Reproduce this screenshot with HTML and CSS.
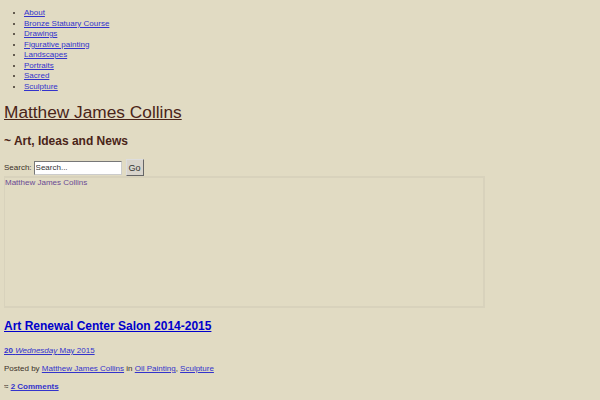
FILE: index.html
```
<!DOCTYPE html>
<html>
<head>
  <meta charset="UTF-8">
  <title>Matthew James Collins ~ Art, Ideas and News</title>
  <link rel="stylesheet" href="styles.css">
</head>
<body>
<ul class="menu">
  <li><a href="#">About</a></li>
  <li><a href="#">Bronze Statuary Course</a></li>
  <li><a href="#">Drawings</a></li>
  <li><a href="#">Figurative painting</a></li>
  <li><a href="#">Landscapes</a></li>
  <li><a href="#">Portraits</a></li>
  <li><a href="#">Sacred</a></li>
  <li><a href="#">Sculpture</a></li>
</ul>
<header class="masthead">
  <h1 class="siteTitle"><a href="#">Matthew James Collins</a></h1>
  <h2 class="siteDesc">~ Art, Ideas and News</h2>
</header>
<form class="search">
  <label>Search:</label>
  <input type="text" value="Search...">
  <button type="button">Go</button>
</form>
<div class="banner">
  <a href="#">Matthew James Collins</a>
</div>
<div class="post">
  <h2 class="postTitle"><a href="#">Art Renewal Center Salon 2014-2015</a></h2>
  <p class="postDate"><a href="#"><b>20</b> <i>Wednesday</i> May 2015</a></p>
  <p class="postMeta">Posted by <a href="#">Matthew James Collins</a> in <a href="#">Oil Painting</a>, <a href="#">Sculpture</a></p>
  <p class="postComments">&asymp; <a href="#">2 Comments</a></p>
</div>
</body>
</html>
```

FILE: styles.css
```
body {
  margin: 0 4px;
  background-color: #e1dbc3;
  font-family: 'Liberation Sans', Arial, sans-serif;
  font-size: 8px;
  color: #3a3028;
}
a {
  color: #3333cc;
}
.menu {
  margin: 8px 0 0 0;
  padding-left: 20px;
  line-height: 10.5px;
}
.masthead {
  margin-top: 10px;
}
.siteTitle {
  margin: 0;
  font-size: 17.3px;
  font-weight: normal;
  line-height: 20px;
}
.siteTitle a {
  color: #4a2418;
}
.siteDesc {
  margin: 12px 0 0 0;
  font-size: 12px;
  line-height: 15px;
  color: #4a2418;
}
.search {
  margin-top: 10px;
  display: flex;
  align-items: center;
  height: 17px;
}
.search label {
  margin-right: 2px;
}
.search input {
  width: 84px;
  height: 12px;
  padding: 0 1px;
  margin: 0;
  border: 1px solid #777;
  border-color: #777 #ccc #ccc #777;
  background: #fff;
  font: 8px 'Liberation Sans', Arial, sans-serif;
  color: #333;
}
.search button {
  margin-left: 4px;
  width: 18px;
  height: 17px;
  padding: 0;
  border: 1px solid #888;
  border-color: #ddd #666 #666 #ddd;
  background: #d8d4cc;
  font: 9px 'Liberation Sans', Arial, sans-serif;
  color: #333;
}
.banner {
  margin-left: -1px;
  width: 478px;
  height: 128px;
  border: 2px solid #d8d2bc;
  line-height: 10px;
}
.banner a {
  color: #6a4a94;
  text-decoration: none;
}
.post {
  margin-top: 11px;
}
.postTitle {
  margin: 0;
  font-size: 12px;
  line-height: 15px;
}
.postTitle a {
  color: #0000cc;
}
.postDate,
.postMeta,
.postComments {
  margin: 8px 0 0 0;
  line-height: 10px;
}
.postDate {
  margin-top: 12px;
}
.postComments a {
  font-weight: bold;
}
```
